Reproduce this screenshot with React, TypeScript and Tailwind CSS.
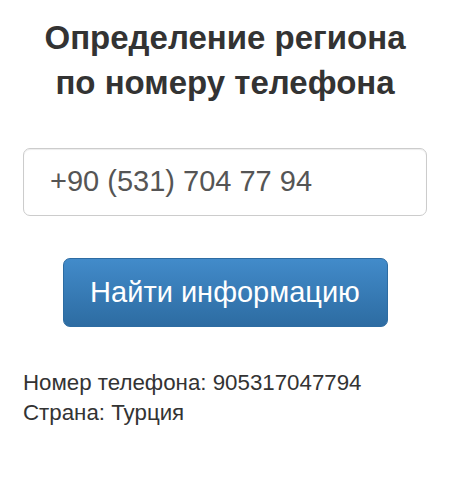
export default function App() {
  return (
    <div className="w-[450px] h-[480px] bg-white px-[23px] pt-[15px] text-[#333]" style={{ fontFamily: '"Liberation Sans", Arial, sans-serif' }}>
      <h1 className="text-center text-[33px] font-bold leading-[45px] text-[#333]">
        Определение региона<br />по номеру телефона
      </h1>
      <div className="mt-[43px] h-[68px] rounded-[7px] border border-[#ccc] shadow-[inset_0_1px_1px_rgba(0,0,0,0.075)] flex items-center pl-[26px] text-[29px] text-[#555]">
        +90 (531) 704 77 94
      </div>
      <div className="mt-[42px] flex justify-center">
        <button className="w-[325px] h-[69px] rounded-[7px] border border-[#2d6ca2] bg-gradient-to-b from-[#428bca] to-[#2d6ca2] text-white text-[29px]">
          Найти информацию
        </button>
      </div>
      <div className="mt-[41px] text-[22.3px] leading-[30px] text-[#333]">
        <div>Номер телефона: 905317047794</div>
        <div>Страна: Турция</div>
      </div>
    </div>
  );
}
